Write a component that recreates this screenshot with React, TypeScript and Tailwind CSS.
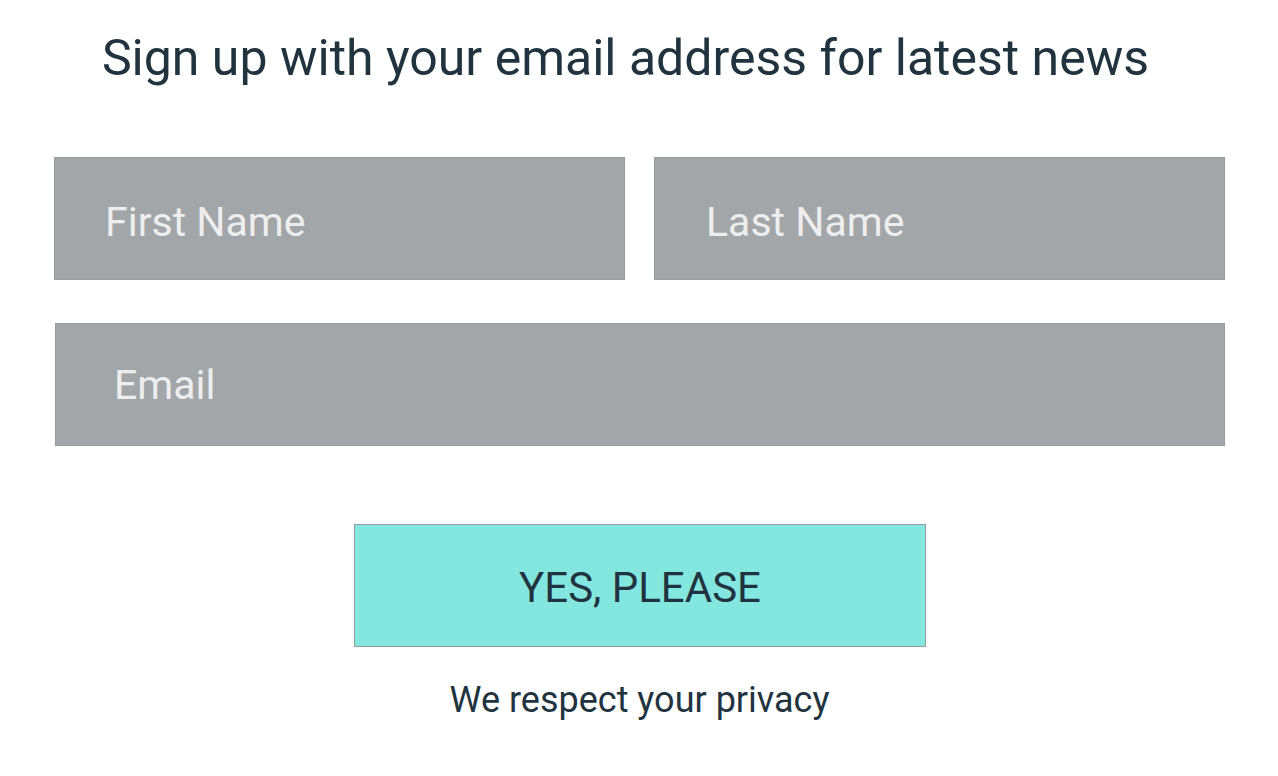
export default function App() {
  return (
    <div className="min-h-[776px] bg-white font-['Roboto','Liberation_Sans',sans-serif] text-[#223340]">
      <div className="mx-auto w-[1172px] pl-[1px] pt-[28px]">
        <h1 className="text-center text-[50px] leading-[60px] pr-[28px]">
          Sign up with your email address for latest news
        </h1>

        <form className="mt-[69px] flex flex-col" onSubmit={(e) => e.preventDefault()}>
          <div className="flex gap-[29px]">
            <input
              type="text"
              placeholder="First Name"
              className="h-[123px] w-[571px] border border-[#999c9e] bg-[#a3a6a8] pl-[50px] pt-[6px] text-[41px] text-[#eeeeee] outline-none placeholder:text-[#eeeeee]"
            />
            <input
              type="text"
              placeholder="Last Name"
              className="h-[123px] w-[571px] border border-[#999c9e] bg-[#a3a6a8] pl-[51px] pt-[6px] text-[41px] text-[#eeeeee] outline-none placeholder:text-[#eeeeee]"
            />
          </div>
          <input
            type="email"
            placeholder="Email"
            className="ml-[1px] mt-[43px] h-[123px] w-[1170px] border border-[#999c9e] bg-[#a3a6a8] pl-[58px] text-[41px] text-[#eeeeee] outline-none placeholder:text-[#eeeeee]"
          />

          <div className="mt-[78px] flex justify-center">
            <button
              type="submit"
              className="ml-[1px] h-[123px] w-[572px] border border-[#999c9e] bg-[#83e6df] pt-[4px] text-[42px] text-[#223340]"
            >
              YES, PLEASE
            </button>
          </div>

          <p className="mt-[31px] text-center text-[36px] leading-[44px]">We respect your privacy</p>
        </form>
      </div>
    </div>
  );
}
